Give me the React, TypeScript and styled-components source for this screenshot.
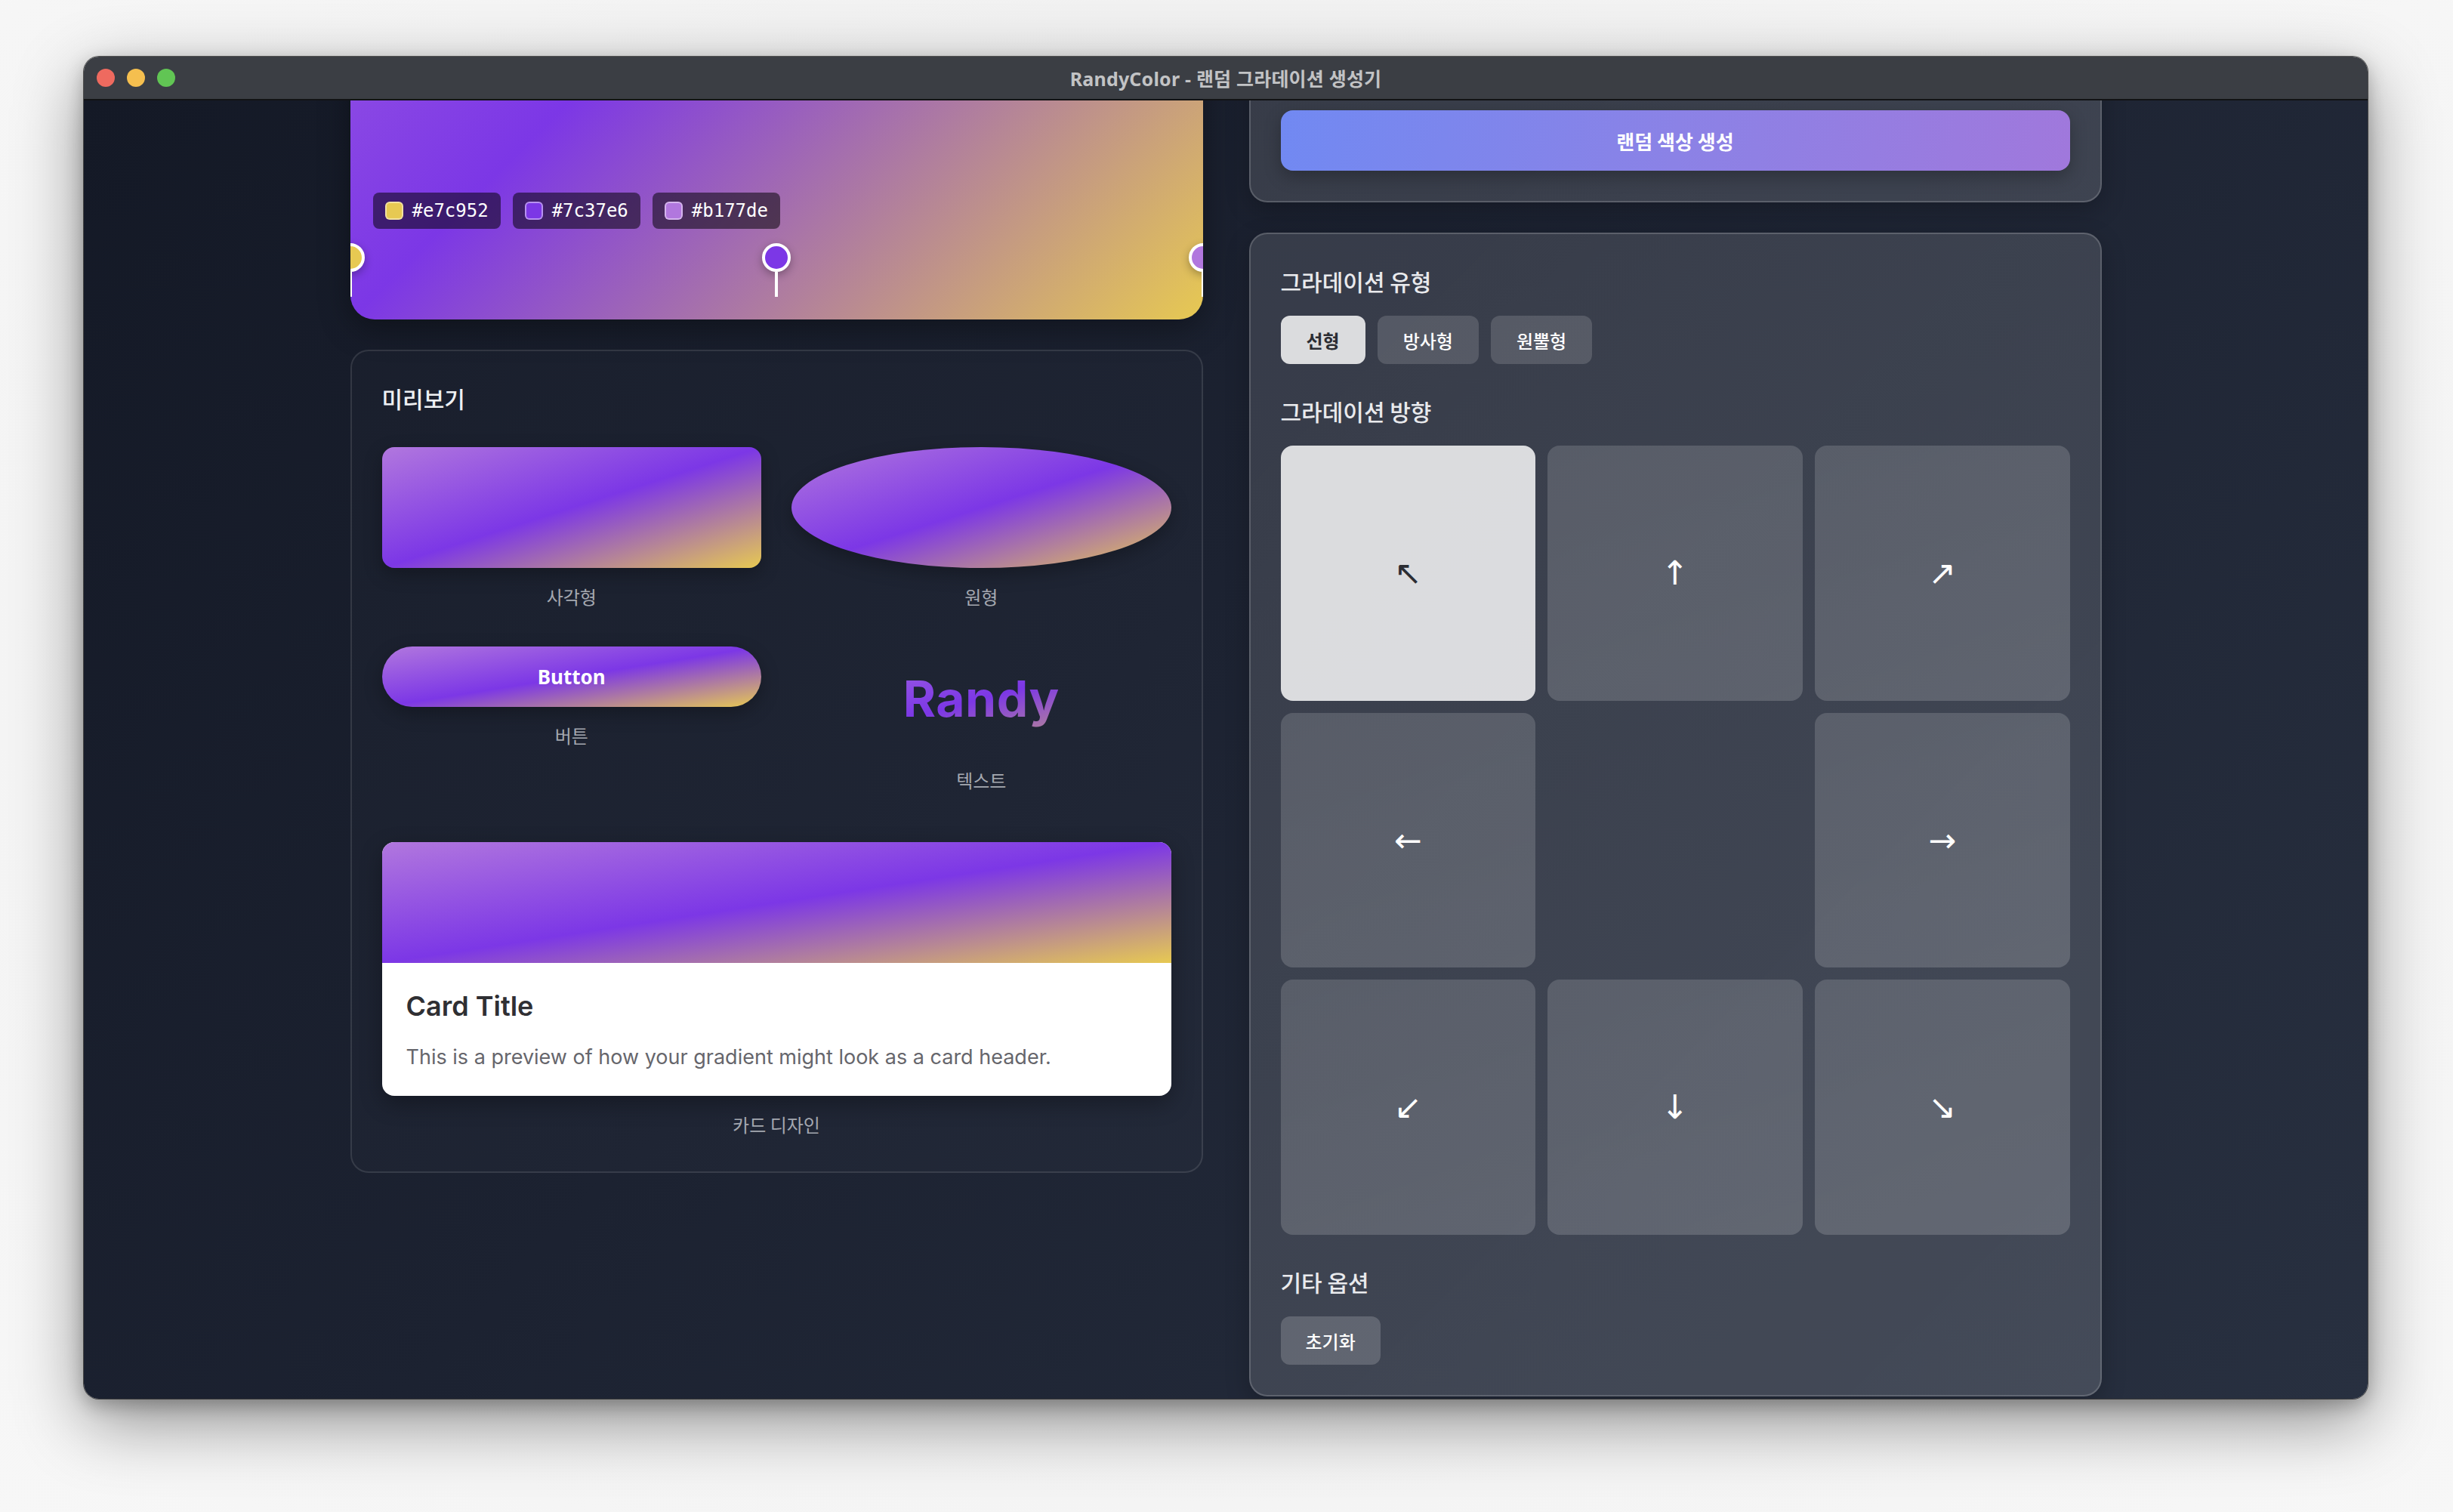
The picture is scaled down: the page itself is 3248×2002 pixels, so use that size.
import React, { useLayoutEffect, useRef } from "react";
import styled, { createGlobalStyle } from "styled-components";

const KR = `"Noto Sans CJK KR", "Noto Sans", sans-serif`;
const UI = `"Noto Sans", "Noto Sans CJK KR", sans-serif`;
const DISPLAY = `Inter, "Noto Sans", "Noto Sans CJK KR", sans-serif`;
const MONO = `"DejaVu Sans Mono", "Liberation Mono", monospace`;

const stops = [
  { color: "#e7c952", pos: 0 },
  { color: "#7c37e6", pos: 50 },
  { color: "#b177de", pos: 100 },
];

const GRADIENT = `linear-gradient(to top left, ${stops
  .map((s) => `${s.color} ${s.pos}%`)
  .join(", ")})`;

const directions = [
  { key: "tl", glyph: "↖", active: true },
  { key: "t", glyph: "↑" },
  { key: "tr", glyph: "↗" },
  { key: "l", glyph: "←" },
  { key: "c", glyph: "", empty: true },
  { key: "r", glyph: "→" },
  { key: "bl", glyph: "↙" },
  { key: "b", glyph: "↓" },
  { key: "br", glyph: "↘" },
];

const GlobalStyle = createGlobalStyle`
  html, body { margin: 0; padding: 0; }
  body { background: #efefef; font-family: ${KR}; }
  *, *::before, *::after { box-sizing: border-box; }
  button { font-family: ${KR}; cursor: pointer; }
`;

const Stage = styled.div`
  width: 3248px;
  height: 2002px;
  padding: 75px 0 0 111px;
  background: radial-gradient(ellipse at 50% 45%, #e4e4e4 0%, #f4f4f4 70%, #f7f7f7 100%);
  overflow: hidden;
`;

const Window = styled.div`
  width: 3024px;
  height: 1777px;
  border-radius: 20px;
  overflow: hidden;
  display: flex;
  flex-direction: column;
  box-shadow: 0 0 0 1px rgba(0, 0, 0, 0.6), 0 30px 90px rgba(0, 0, 0, 0.42),
    0 8px 24px rgba(0, 0, 0, 0.25);
`;

const TitleBar = styled.div`
  flex: none;
  height: 58px;
  display: grid;
  grid-template-columns: 1fr auto 1fr;
  align-items: center;
  padding: 0 17px;
  background: #3b3e44;
  border-bottom: 2px solid #121315;
`;

const Lights = styled.div`
  display: flex;
  gap: 16px;
`;

const Light = styled.span<{ $c: string }>`
  width: 24px;
  height: 24px;
  border-radius: 50%;
  background: ${(p) => p.$c};
`;

const WindowTitle = styled.div`
  font-family: ${UI};
  font-weight: 700;
  font-size: 25px;
  color: #c2c3c5;
  letter-spacing: 0.2px;
`;

const Body = styled.div`
  flex: 1;
  overflow: hidden;
  background: linear-gradient(135deg, #141926 0%, #1c2231 45%, #283040 100%);
`;

const Content = styled.div`
  width: 2319px;
  margin: 0 auto;
  padding: 40px 0 240px;
  display: grid;
  grid-template-columns: 1129px 1129px;
  column-gap: 61px;
  align-items: start;
`;

const Column = styled.div`
  display: flex;
  flex-direction: column;
  gap: 40px;
`;

const GradientPanel = styled.div`
  position: relative;
  aspect-ratio: 1 / 1;
  border-radius: 32px;
  overflow: hidden;
  background: ${GRADIENT};
  box-shadow: 0 12px 40px rgba(0, 0, 0, 0.35);
`;

const ChipRow = styled.div`
  position: absolute;
  left: 30px;
  bottom: 120px;
  display: flex;
  gap: 16px;
`;

const Chip = styled.div`
  height: 48px;
  padding: 0 16px;
  display: flex;
  align-items: center;
  gap: 12px;
  border-radius: 8px;
  background: rgba(0, 0, 0, 0.52);
  color: #fff;
  font-family: ${MONO};
  font-size: 24px;
`;

const Swatch = styled.span<{ $c: string }>`
  width: 24px;
  height: 24px;
  border-radius: 6px;
  border: 2px solid rgba(255, 255, 255, 0.45);
  background: ${(p) => p.$c};
`;

const Track = styled.div`
  position: absolute;
  left: 0;
  right: 0;
  bottom: 30px;
  height: 71px;
`;

const Handle = styled.div`
  position: absolute;
  top: 0;
  transform: translateX(-50%);
  display: flex;
  flex-direction: column;
  align-items: center;
`;

const Knob = styled.span<{ $c: string }>`
  width: 38px;
  height: 38px;
  border-radius: 50%;
  border: 4px solid #fff;
  background: ${(p) => p.$c};
  box-shadow: 0 4px 12px rgba(0, 0, 0, 0.3);
`;

const Stem = styled.span`
  width: 4px;
  height: 33px;
  background: #fff;
`;

const PreviewCard = styled.section`
  border: 2px solid rgba(255, 255, 255, 0.11);
  border-radius: 24px;
  padding: 40px 40px 44px;
  background: rgba(255, 255, 255, 0.015);
`;

const CardHeading = styled.h2`
  margin: 0 0 42px;
  font-size: 30px;
  line-height: 45px;
  font-weight: 500;
  color: #eef0f3;
`;

const PreviewGrid = styled.div`
  display: grid;
  grid-template-columns: 1fr 1fr;
  gap: 48px 40px;
`;

const PreviewItem = styled.div<{ $wide?: boolean }>`
  display: flex;
  flex-direction: column;
  align-items: center;
  ${(p) => (p.$wide ? "grid-column: 1 / -1; margin-top: 16px;" : "")}
`;

const Shape = styled.div<{ $round?: boolean }>`
  width: 100%;
  height: 160px;
  background: ${GRADIENT};
  border-radius: ${(p) => (p.$round ? "50%" : "16px")};
  box-shadow: 0 8px 24px rgba(0, 0, 0, 0.28);
`;

const PillButton = styled.button`
  width: 100%;
  height: 80px;
  border: none;
  border-radius: 40px;
  background: ${GRADIENT};
  color: #fff;
  font-family: ${UI};
  font-weight: 700;
  font-size: 26px;
  box-shadow: 0 8px 24px rgba(0, 0, 0, 0.28);
`;

const GradientText = styled.div`
  width: 100%;
  padding: 20px 0;
  text-align: center;
  font-family: ${DISPLAY};
  font-weight: 700;
  font-size: 66px;
  line-height: 1.5;
  letter-spacing: 0.5px;
  background: ${GRADIENT};
  -webkit-background-clip: text;
  background-clip: text;
  color: transparent;
`;

const ItemLabel = styled.div`
  margin-top: 20px;
  font-size: 24px;
  line-height: 36px;
  color: #a4a8b0;
`;

const MockCard = styled.div`
  width: 100%;
  border-radius: 16px;
  overflow: hidden;
  background: #fff;
  box-shadow: 0 10px 30px rgba(0, 0, 0, 0.3);
`;

const MockHeader = styled.div`
  height: 160px;
  background: ${GRADIENT};
`;

const MockBody = styled.div`
  padding: 30px 32px;
`;

const MockTitle = styled.h3`
  margin: 0 0 20px;
  font-family: ${DISPLAY};
  font-weight: 600;
  font-size: 36px;
  line-height: 54px;
  color: #2f2f33;
`;

const MockText = styled.p`
  margin: 0;
  font-family: ${DISPLAY};
  font-size: 27px;
  line-height: 42px;
  color: #66666c;
`;

const GlassCard = styled.section<{ $tall?: boolean }>`
  display: flex;
  flex-direction: column;
  ${(p) => (p.$tall ? "min-height: 974px;" : "")}
  padding: 40px;
  border: 2px solid rgba(255, 255, 255, 0.17);
  border-radius: 24px;
  background: linear-gradient(135deg, rgba(255, 255, 255, 0.125), rgba(255, 255, 255, 0.14));
  box-shadow: 0 10px 32px rgba(0, 0, 0, 0.22);
`;

const RandomButton = styled.button`
  margin-top: auto;
  width: 100%;
  height: 80px;
  border: none;
  border-radius: 16px;
  background: linear-gradient(100deg, #7189f2 0%, #8b82e6 50%, #a078dc 100%);
  color: #fff;
  font-weight: 700;
  font-size: 26px;
  box-shadow: 0 8px 22px rgba(0, 0, 0, 0.25);
`;

const Section = styled.div`
  & + & {
    margin-top: 40px;
  }
`;

const SectionLabel = styled.h3`
  margin: 0 0 23px;
  font-size: 30px;
  line-height: 45px;
  font-weight: 500;
  color: #e9eaed;
`;

const ButtonRow = styled.div`
  display: flex;
  gap: 16px;
`;

const Toggle = styled.button<{ $active?: boolean }>`
  height: 64px;
  padding: 0 34px;
  border: none;
  border-radius: 12px;
  font-size: 24px;
  font-weight: ${(p) => (p.$active ? 700 : 500)};
  background: ${(p) => (p.$active ? "rgba(255,255,255,0.82)" : "rgba(255,255,255,0.15)")};
  color: ${(p) => (p.$active ? "#2b2d33" : "#ffffff")};
`;

const DirGrid = styled.div`
  display: grid;
  grid-template-columns: repeat(3, 1fr);
  gap: 16px;
`;

const DirCell = styled.button<{ $active?: boolean; $empty?: boolean }>`
  aspect-ratio: 1 / 1;
  border: none;
  border-radius: 16px;
  display: flex;
  align-items: center;
  justify-content: center;
  font-family: "DejaVu Sans", sans-serif;
  font-size: 44px;
  line-height: 1;
  background: ${(p) =>
    p.$empty
      ? "transparent"
      : p.$active
      ? "rgba(255,255,255,0.82)"
      : "linear-gradient(160deg, rgba(255,255,255,0.15), rgba(255,255,255,0.17))"};
  color: ${(p) => (p.$active ? "#2b2d33" : "#ffffff")};
  visibility: ${(p) => (p.$empty ? "hidden" : "visible")};
`;

const ResetButton = styled.button`
  height: 64px;
  padding: 0 33px;
  border: none;
  border-radius: 12px;
  font-size: 24px;
  font-weight: 500;
  background: rgba(255, 255, 255, 0.18);
  color: #fff;
`;

export default function App() {
  const bodyRef = useRef<HTMLDivElement>(null);

  useLayoutEffect(() => {
    if (bodyRef.current) bodyRef.current.scrollTop = 879;
  }, []);

  return (
    <>
      <GlobalStyle />
      <Stage>
        <Window>
          <TitleBar>
            <Lights>
              <Light $c="#ee6a5f" />
              <Light $c="#f5bf4f" />
              <Light $c="#61c554" />
            </Lights>
            <WindowTitle>RandyColor - 랜덤 그라데이션 생성기</WindowTitle>
            <span />
          </TitleBar>
          <Body ref={bodyRef}>
            <Content>
              <Column>
                <GradientPanel>
                  <ChipRow>
                    {stops.map((s) => (
                      <Chip key={s.color}>
                        <Swatch $c={s.color} />
                        {s.color}
                      </Chip>
                    ))}
                  </ChipRow>
                  <Track>
                    {stops.map((s) => (
                      <Handle key={s.color} style={{ left: `${s.pos}%` }}>
                        <Knob $c={s.color} />
                        <Stem />
                      </Handle>
                    ))}
                  </Track>
                </GradientPanel>

                <PreviewCard>
                  <CardHeading>미리보기</CardHeading>
                  <PreviewGrid>
                    <PreviewItem>
                      <Shape />
                      <ItemLabel>사각형</ItemLabel>
                    </PreviewItem>
                    <PreviewItem>
                      <Shape $round />
                      <ItemLabel>원형</ItemLabel>
                    </PreviewItem>
                    <PreviewItem>
                      <PillButton>Button</PillButton>
                      <ItemLabel>버튼</ItemLabel>
                    </PreviewItem>
                    <PreviewItem>
                      <GradientText>Randy</GradientText>
                      <ItemLabel>텍스트</ItemLabel>
                    </PreviewItem>
                    <PreviewItem $wide>
                      <MockCard>
                        <MockHeader />
                        <MockBody>
                          <MockTitle>Card Title</MockTitle>
                          <MockText>
                            This is a preview of how your gradient might look as a card header.
                          </MockText>
                        </MockBody>
                      </MockCard>
                      <ItemLabel>카드 디자인</ItemLabel>
                    </PreviewItem>
                  </PreviewGrid>
                </PreviewCard>
              </Column>

              <Column>
                <GlassCard $tall>
                  <RandomButton>랜덤 색상 생성</RandomButton>
                </GlassCard>

                <GlassCard>
                  <Section>
                    <SectionLabel>그라데이션 유형</SectionLabel>
                    <ButtonRow>
                      <Toggle $active>선형</Toggle>
                      <Toggle>방사형</Toggle>
                      <Toggle>원뿔형</Toggle>
                    </ButtonRow>
                  </Section>
                  <Section>
                    <SectionLabel>그라데이션 방향</SectionLabel>
                    <DirGrid>
                      {directions.map((d) => (
                        <DirCell key={d.key} $active={d.active} $empty={d.empty}>
                          {d.glyph}
                        </DirCell>
                      ))}
                    </DirGrid>
                  </Section>
                  <Section>
                    <SectionLabel>기타 옵션</SectionLabel>
                    <ButtonRow>
                      <ResetButton>초기화</ResetButton>
                    </ButtonRow>
                  </Section>
                </GlassCard>
              </Column>
            </Content>
          </Body>
        </Window>
      </Stage>
    </>
  );
}
